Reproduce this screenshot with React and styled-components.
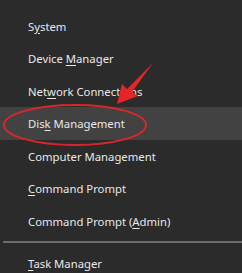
import React from 'react'
import styled, { createGlobalStyle } from 'styled-components'

const Global = createGlobalStyle`
  html, body { margin: 0; padding: 0; background: #2b2b2b; }
  body { font-family: "Noto Sans", "Open Sans", sans-serif; }
`

const Menu = styled.div`
  position: relative;
  width: 242px;
  height: 273px;
  background: #2b2b2b;
  padding-top: 9.75px;
  box-sizing: border-box;
  overflow: hidden;
`

const Item = styled.div`
  height: 32.5px;
  display: flex;
  align-items: center;
  padding-left: 28px;
  font-size: 11.3px;
  color: #e8e8e8;
  background: ${p => (p.$active ? '#424242' : 'transparent')};
  u { text-decoration: underline; text-underline-offset: 2px; }
`

const Label = styled.span`
  white-space: pre;
`

const Separator = styled.div`
  height: 2px;
  margin: 4px 0 4px 3px;
  background: #6b6b6b;
`

const Overlay = styled.svg`
  position: absolute;
  left: 0;
  top: 0;
  pointer-events: none;
`

const items = [
  ['S', 'y', 'stem'],
  ['Device ', 'M', 'anager'],
  ['Net', 'w', 'ork Connections'],
  ['Dis', 'k', ' Management'],
  ['Computer Management', '', ''],
  ['', 'C', 'ommand Prompt'],
  ['Command Prompt (', 'A', 'dmin)'],
]

export default function App() {
  return (
    <Menu>
      <Global />
      {items.map((it, i) => (
        <Item key={i} $active={i === 3}>
          <Label>{it[0]}{it[1] && <u>{it[1]}</u>}{it[2]}</Label>
        </Item>
      ))}
      <Separator />
      <Item><Label><u>T</u>ask Manager</Label></Item>
      <Overlay width="242" height="273" viewBox="0 0 242 273">
        <ellipse cx="75" cy="125" rx="71" ry="20" fill="none" stroke="#d9262b" strokeWidth="2" />
        <path d="M153 63 L127 89 L122 84 L117 104 L138 96 L132 92 Z" fill="#e3252a" />
      </Overlay>
    </Menu>
  )
}
